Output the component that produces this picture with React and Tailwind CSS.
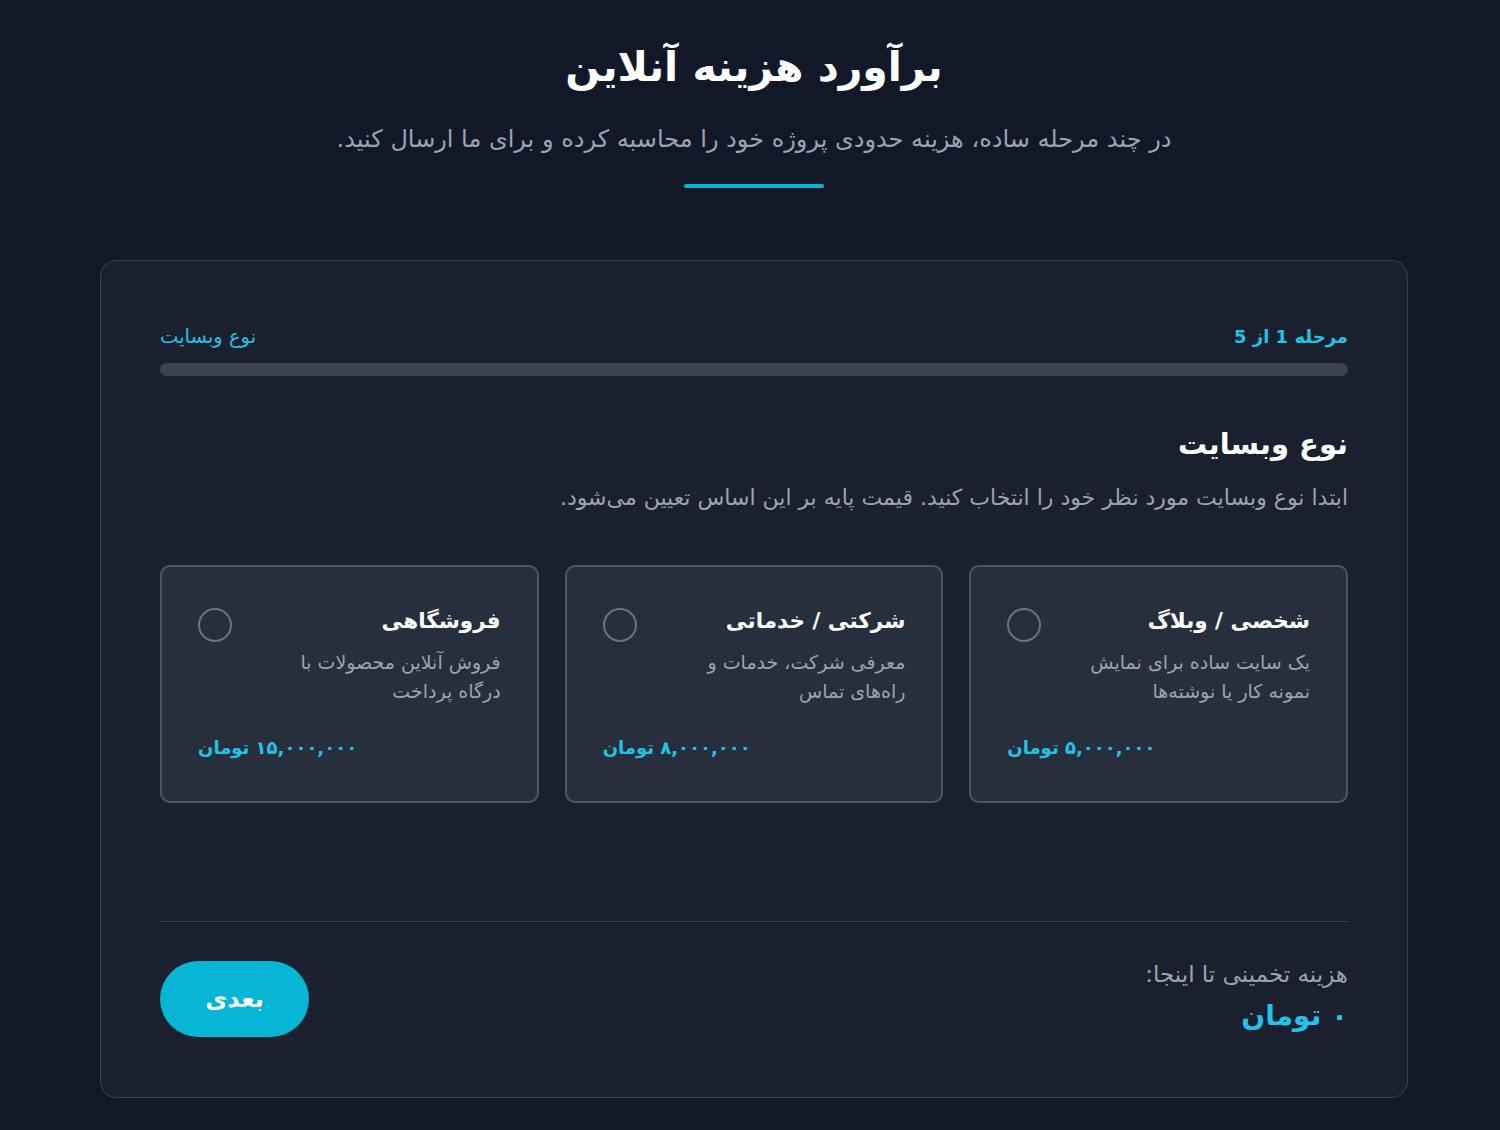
const options = [
  {
    id: 1,
    title: "شخصی / وبلاگ",
    desc: "یک سایت ساده برای نمایش نمونه کار یا نوشته‌ها",
    price: "۵,۰۰۰,۰۰۰ تومان",
  },
  {
    id: 2,
    title: "شرکتی / خدماتی",
    desc: "معرفی شرکت، خدمات و راه‌های تماس",
    price: "۸,۰۰۰,۰۰۰ تومان",
  },
  {
    id: 3,
    title: "فروشگاهی",
    desc: "فروش آنلاین محصولات با درگاه پرداخت",
    price: "۱۵,۰۰۰,۰۰۰ تومان",
  },
];

function OptionCard({ option }) {
  return (
    <div className="flex h-[238px] flex-col rounded-[10px] border-2 border-[#4b5563] bg-[#272f3d] px-9 pt-[38px]">
      <div className="flex items-start justify-between">
        <div className="flex flex-col">
          <h3 className="text-[21.5px] font-bold leading-[32px] text-white">{option.title}</h3>
          <p className="mt-[11px] w-[230px] text-[19px] leading-[29px] text-[#9ca3af]">{option.desc}</p>
        </div>
        <span className="mt-[3px] h-[34px] w-[34px] rounded-full border-2 border-[#6b7280]" />
      </div>
      <span className="mt-[28px] self-end text-[18px] font-bold leading-[28px] text-[#22c3e6]">{option.price}</span>
    </div>
  );
}

export default function App() {
  return (
    <div
      dir="rtl"
      className="min-h-[1130px] bg-[#111827] pl-2 pt-[36px] pb-8"
      style={{ fontFamily: '"DejaVu Sans", "Noto Sans", sans-serif' }}
    >
      <div className="flex flex-col items-center">
        <h1 className="text-[41px] font-bold leading-[62px] text-white">برآورد هزینه آنلاین</h1>
        <p className="mt-[24px] text-[24px] leading-[34px] text-[#9ca3af]">
          در چند مرحله ساده، هزینه حدودی پروژه خود را محاسبه کرده و برای ما ارسال کنید.
        </p>
        <div className="mt-[28px] h-[4px] w-[140px] rounded-full bg-[#06b6d4]" />
      </div>

      <div className="mx-auto mt-[72px] w-[1308px] rounded-2xl border border-[#374151] bg-[#1a202e] px-[59px] pt-[61px] pb-[60px]">
        <div className="flex items-center justify-between">
          <span className="text-[18px] font-semibold text-[#22c3e6]">مرحله 1 از 5</span>
          <span className="text-[19.5px] text-[#22c3e6]">نوع وبسایت</span>
        </div>
        <div className="mt-[12px] h-[13px] w-full rounded-full bg-[#3b4352]" />

        <h2 className="mt-[46px] text-[29px] font-bold leading-[44px] text-white">نوع وبسایت</h2>
        <p className="mt-[16px] text-[22px] leading-[32px] text-[#9ca3af]">
          ابتدا نوع وبسایت مورد نظر خود را انتخاب کنید. قیمت پایه بر این اساس تعیین می‌شود.
        </p>

        <div className="mt-[51px] grid grid-cols-3 gap-[26px]">
          {options.map((option) => (
            <OptionCard key={option.id} option={option} />
          ))}
        </div>

        <div className="mt-[118px] border-t border-[#374151] pt-[39px]">
          <div className="flex items-center justify-between">
            <div className="flex flex-col">
              <span className="text-[23px] leading-[24px] text-[#9ca3af]">هزینه تخمینی تا اینجا:</span>
              <span className="mt-[10px] text-[28px] font-bold leading-[40px] text-[#22c3e6]">۰ تومان</span>
            </div>
            <button className="h-[76px] w-[149px] rounded-full bg-[#06b6d4] text-[24px] font-bold text-white">
              بعدی
            </button>
          </div>
        </div>
      </div>
    </div>
  );
}
